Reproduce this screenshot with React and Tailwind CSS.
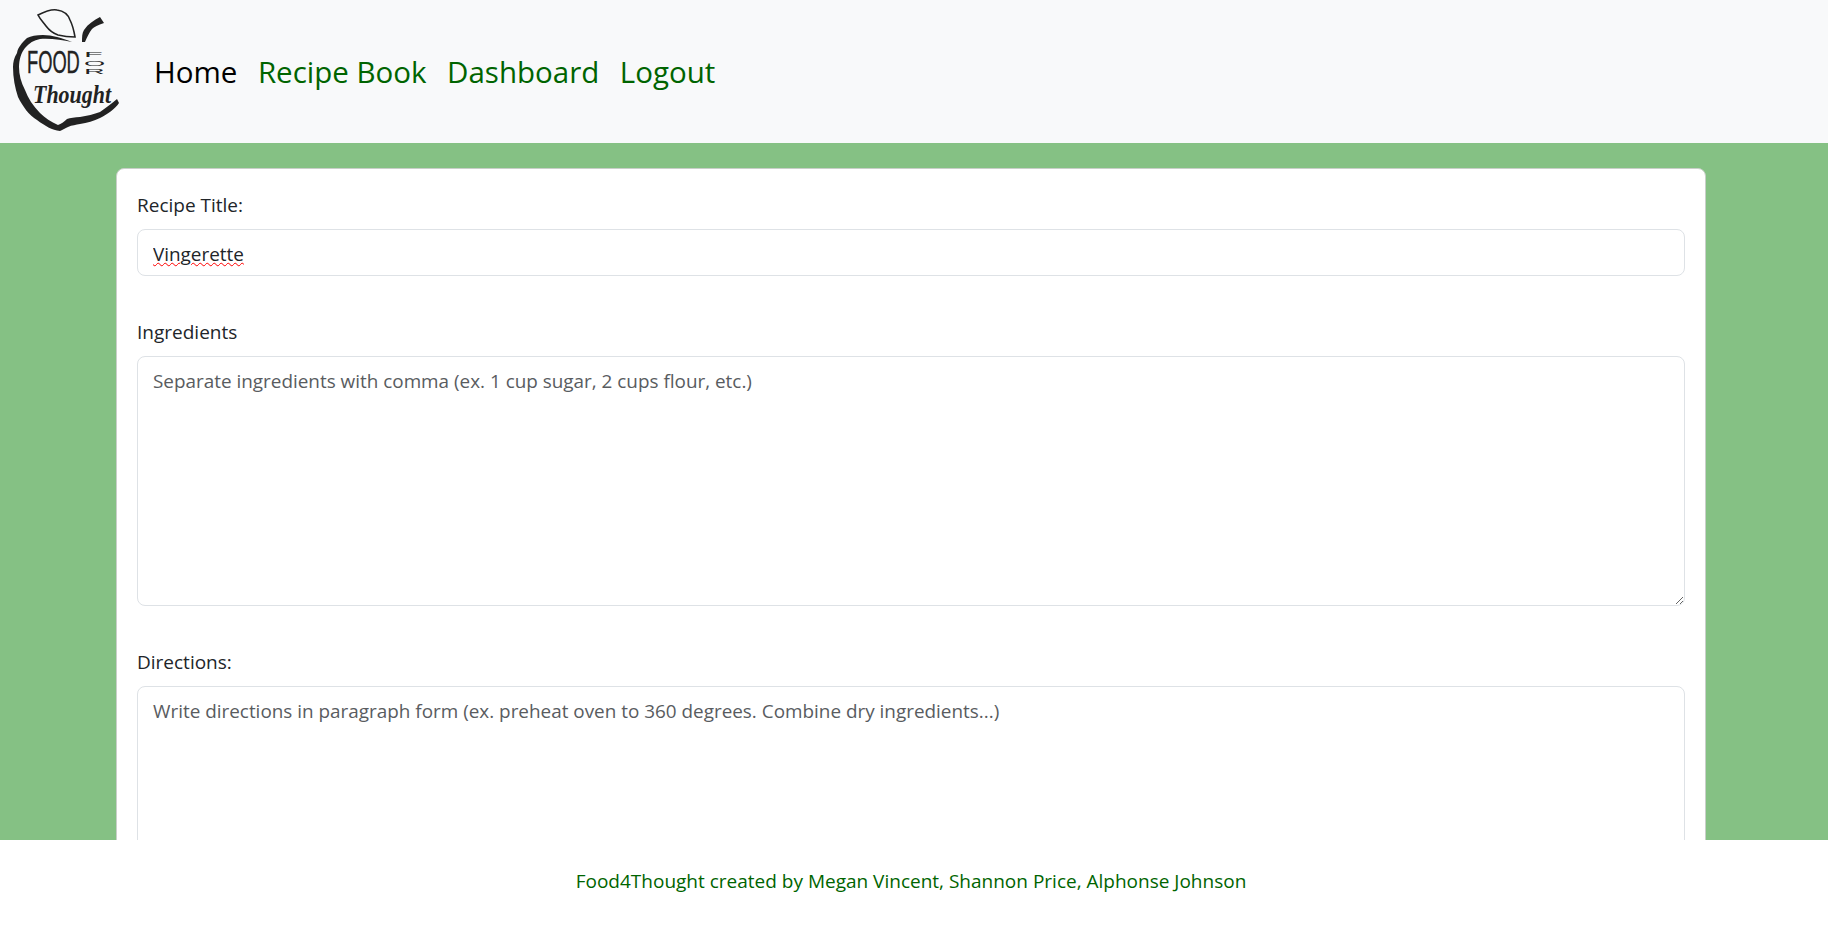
function Logo() {
  const sans = "'Liberation Sans',sans-serif";
  return (
    <svg width="125" height="143" viewBox="0 0 125 143" className="shrink-0">
      <path d="M38 15 C46 11 52 9 57 10 C64 11 68 14 70 20 C73 26 74 31 75 37 C68 37 62 36 58 35 C52 33 49 30 46 26 C43 22 40 19 38 15 Z" fill="none" stroke="#222" strokeWidth="1.6" />
      <path d="M82 42 C82 37 82 33 84 30 C88 24 94 20 100 17 L104 23 C98 25 94 27 92 29 C89 33 87 37 85 42 Z" fill="#222" />
      <path d="M72 42 C62 38 52 35 43 35 C36 35 31 36 27 38 C22 43 18 47 17 53 C14 58 13 62 13 67 C13 78 15 88 18 97 C23 107 29 115 37 120 C45 126 52 130 60 131 C63 130 65 128 68 127 C72 125 76 125 80 124 C87 123 94 121 100 118 C108 114 115 109 119 103 L117 99 C112 103 106 108 100 112 C94 114 87 116 80 117 C75 117 70 118 67 119 C64 122 61 124 58 125 C51 122 45 118 40 113 C33 106 28 98 25 90 C21 82 19 75 19 67 C19 60 21 53 25 48 C29 43 34 40 40 39 C50 38 62 40 72 42 Z" fill="#222" />
      <text transform="translate(27 73) scale(0.59 1)" fontFamily={sans} fontSize="31" fill="#222" stroke="#222" strokeWidth="0.4">FOOD</text>
      <text transform="translate(84 57) scale(4.4 1)" fontFamily={sans} fontSize="7" fill="#222">F</text>
      <text transform="translate(84 65.5) scale(3.9 1)" fontFamily={sans} fontSize="7" fill="#222">O</text>
      <text transform="translate(84 74) scale(4.1 1)" fontFamily={sans} fontSize="7" fill="#222">R</text>
      <text x="33" y="103" fontFamily="'Liberation Serif',serif" fontStyle="italic" fontWeight="700" fontSize="26" fill="#222" textLength="78" lengthAdjust="spacingAndGlyphs">Thought</text>
    </svg>
  );
}

function Field({ label, children }) {
  return (
    <div className="mb-[42px]">
      <label className="block mb-[9.5px] text-[19px] leading-[28.5px] text-[#212529]">{label}</label>
      {children}
    </div>
  );
}

export default function App() {
  const inputClass =
    "block w-full rounded-[8px] border border-[#dee2e6] bg-white px-[15px] text-[18.9px] leading-[28.5px] text-[#212529] placeholder:text-[#595c5f] outline-none";

  return (
    <div className="flex h-screen flex-col overflow-hidden bg-[#85c184] font-['Open_Sans','Noto_Sans',sans-serif]">
      <nav className="flex h-[143px] shrink-0 items-center bg-[#f8f9fa]">
        <Logo />
        <div className="ml-[29px] flex gap-[20.5px] text-[29.5px] leading-[44px]">
          <a className="text-black">Home</a>
          <a className="text-[#006400]">Recipe Book</a>
          <a className="text-[#006400]">Dashboard</a>
          <a className="text-[#006400]">Logout</a>
        </div>
      </nav>

      <main className="flex-1 overflow-hidden pl-[116px] pr-[122px] pt-[25px]">
        <form className="rounded-[8px] border border-[#c9cfc9] bg-white px-[20px] pt-[22px] pb-[20px]">
          <Field label="Recipe Title:">
            <input
              readOnly
              value="Vingerette"
              className={`${inputClass} h-[47px] pt-[3px] underline decoration-wavy decoration-[#ff0000] decoration-1`}
            />
          </Field>
          <Field label="Ingredients">
            <textarea
              readOnly
              placeholder="Separate ingredients with comma (ex. 1 cup sugar, 2 cups flour, etc.)"
              className={`${inputClass} h-[250px] py-[10px]`}
            />
          </Field>
          <Field label="Directions:">
            <textarea
              readOnly
              placeholder="Write directions in paragraph form (ex. preheat oven to 360 degrees. Combine dry ingredients...)"
              className={`${inputClass} h-[250px] py-[10px]`}
            />
          </Field>
        </form>
      </main>

      <footer className="flex h-[97px] shrink-0 items-start justify-center bg-white pt-[27px] pr-[6px] text-[19px] leading-[28.5px] text-[#006400]">
        Food4Thought created by Megan Vincent, Shannon Price, Alphonse Johnson
      </footer>
    </div>
  );
}
